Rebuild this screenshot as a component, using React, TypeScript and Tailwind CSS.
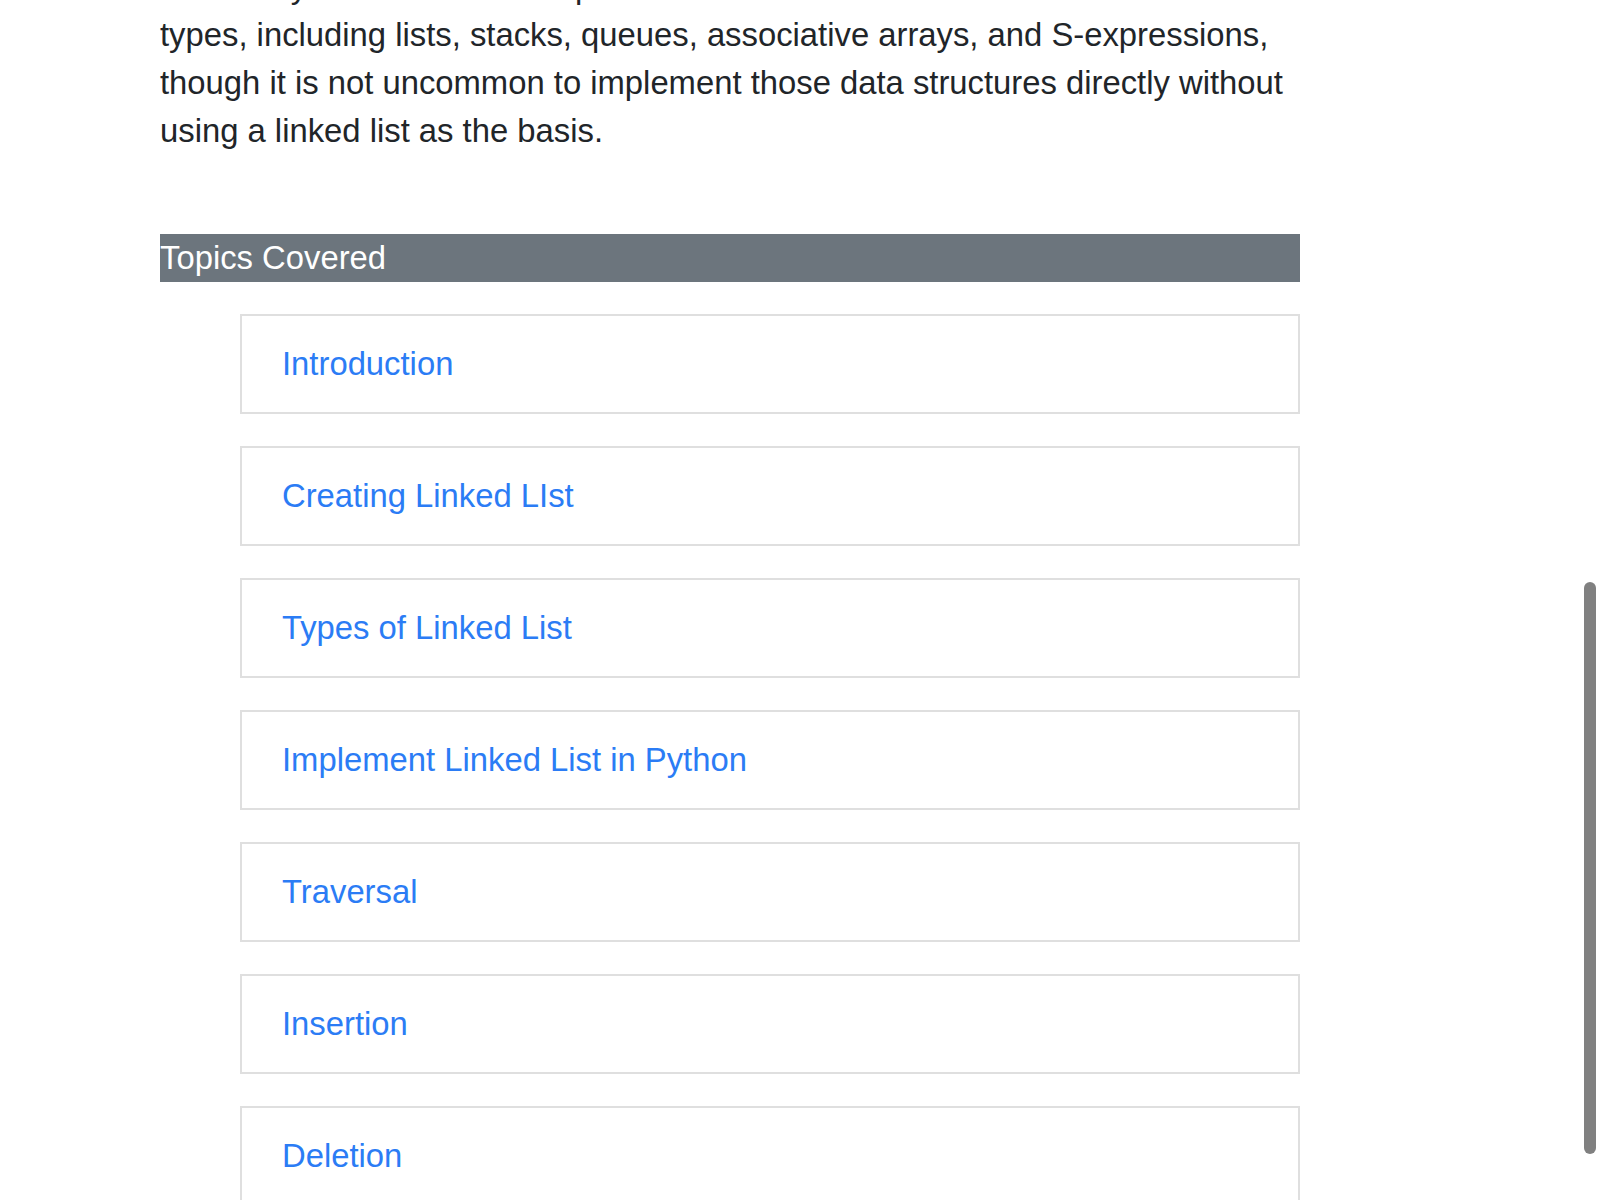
import React from "react";

const topics = [
  "Introduction",
  "Creating Linked LIst",
  "Types of Linked List",
  "Implement Linked List in Python",
  "Traversal",
  "Insertion",
  "Deletion",
];

export default function App() {
  return (
    <div className="relative h-[1200px] w-[1600px] overflow-hidden bg-white font-['Liberation_Sans',Arial,sans-serif] text-[32.8px] leading-[48px]">
      <div className="ml-[160px] w-[1140px]">
        <p className="-mt-[37px] text-[#212529]">
          lists. They can be used to implement several other common abstract data
          <br />
          types, including lists, stacks, queues, associative arrays, and S-expressions,
          <br />
          though it is not uncommon to implement those data structures directly without
          <br />
          using a linked list as the basis.
        </p>
        <div className="mt-[79px] h-[48px] bg-[#6c757d] text-white">Topics Covered</div>
        <ul className="ml-[80px] mt-[32px] flex flex-col gap-[32px]">
          {topics.map((t) => (
            <li key={t} className="border-2 border-[#dfdfdf] px-[40px] py-[24px]">
              <a href="#" className="text-[#2b7cf5] no-underline">
                {t}
              </a>
            </li>
          ))}
        </ul>
      </div>
      <div className="absolute left-[1584px] top-[582px] h-[572px] w-[12px] rounded-full bg-[#808080]" />
    </div>
  );
}
